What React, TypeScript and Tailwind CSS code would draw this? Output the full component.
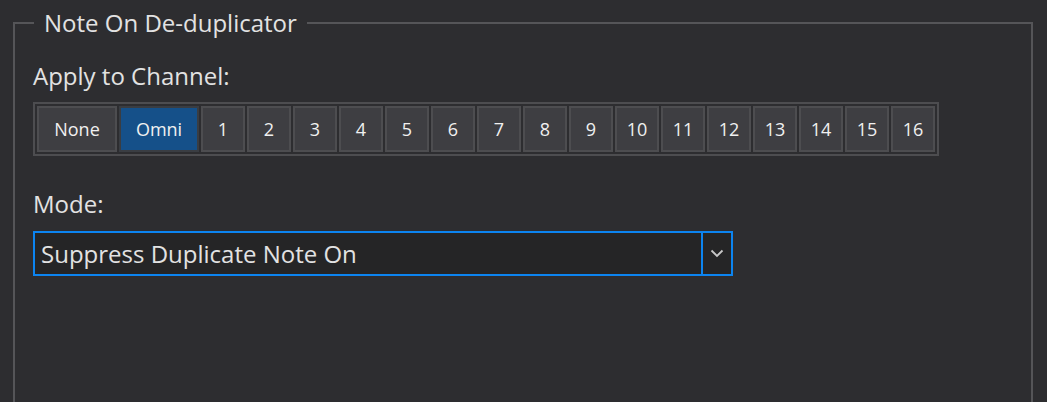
const channels = Array.from({ length: 16 }, (_, i) => String(i + 1));

function ChannelButton({ label, wide, active }: { label: string; wide?: boolean; active?: boolean }) {
  return (
    <button
      className={
        "flex h-[46px] items-center justify-center border-2 text-[18px] text-[#f0f0f0] " +
        (wide ? "w-[80px] " : "w-[44px] ") +
        (active ? "border-[#3a3d42] bg-[#155089]" : "border-[#4d4d50] bg-[#3e3e42]")
      }
    >
      {label}
    </button>
  );
}

export default function App() {
  return (
    <div
      className="h-[402px] w-[1047px] overflow-hidden bg-[#2d2d30] text-[#e2e2e2]"
      style={{ fontFamily: '"Open Sans", "Noto Sans", sans-serif' }}
    >
      <fieldset className="ml-[13px] mt-[10px] h-[420px] w-[1020px] border-2 border-[#555558]">
        <legend className="ml-[19px] px-[10px] text-[24px] leading-[26px]">Note On De-duplicator</legend>

        <div className="flex flex-col items-start pl-[18px]">
          <div className="mt-[25px] text-[24px] leading-[30px]">Apply to Channel:</div>

          <div className="mt-[11px] flex gap-[2px] border-2 border-[#4d4d50] p-[2px]">
            <ChannelButton label="None" wide />
            <ChannelButton label="Omni" wide active />
            {channels.map((c) => (
              <ChannelButton key={c} label={c} />
            ))}
          </div>

          <div className="mt-[33px] text-[24px] leading-[30px]">Mode:</div>

          <div className="mt-[12px] flex h-[45px] w-[700px] border-2 border-[#0c84f0] bg-[#252526]">
            <div className="flex flex-1 items-center pl-[6px] text-[24px]">Suppress Duplicate Note On</div>
            <div className="flex w-[30px] items-center justify-center border-l-2 border-[#0c84f0]">
              <svg width="14" height="9" viewBox="0 0 14 9" fill="none">
                <polyline points="1.5,1.5 7,7 12.5,1.5" stroke="#c8c8c8" strokeWidth="1.8" />
              </svg>
            </div>
          </div>
        </div>
      </fieldset>
    </div>
  );
}
